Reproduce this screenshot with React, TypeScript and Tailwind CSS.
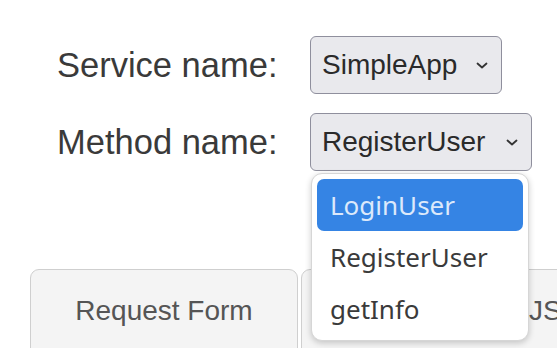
import React from "react";

function Chevron() {
  return (
    <svg width="14" height="9" viewBox="0 0 14 9" className="shrink-0">
      <polyline points="2.5,2.5 7,6.5 11.5,2.5" fill="none" stroke="#333" strokeWidth="1.8" strokeLinecap="round" strokeLinejoin="round" />
    </svg>
  );
}

function FakeSelect({ value, width }: { value: string; width: string }) {
  return (
    <div
      className={`flex h-[58px] shrink-0 items-center justify-between rounded-[6px] border border-[#8f8f9d] bg-[#e9e9ed] pl-[11px] pr-[12px] text-[28px] text-[#2a2a2a] ${width}`}
      style={{ fontFamily: '"Liberation Sans", Arial, sans-serif' }}
    >
      <span className="leading-none">{value}</span>
      <Chevron />
    </div>
  );
}

export default function App() {
  return (
    <div className="relative h-[348px] w-[557px] overflow-hidden bg-white" style={{ fontFamily: '"Liberation Sans", Arial, sans-serif' }}>
      <div className="flex flex-col gap-[19px] pl-[57px] pt-[36px]">
        <div className="flex items-center">
          <span className="w-[253px] shrink-0 text-[34.5px] leading-none text-[#3a3a3a]">Service name:</span>
          <FakeSelect value="SimpleApp" width="w-[192px]" />
        </div>
        <div className="flex items-center">
          <span className="w-[253px] shrink-0 text-[34.5px] leading-none text-[#3a3a3a]">Method name:</span>
          <FakeSelect value="RegisterUser" width="w-[222px]" />
        </div>
      </div>

      <div className="mt-[98px] flex gap-[3px] pl-[30px]">
        <div className="h-[100px] w-[268px] shrink-0 rounded-t-[9px] border border-[#cfcfcf] bg-[#f4f4f4] pt-[25px] text-center text-[28px] leading-[32px] text-[#555]">
          Request Form
        </div>
        <div className="h-[100px] w-[300px] shrink-0 rounded-t-[9px] border border-[#cfcfcf] bg-[#f4f4f4] pl-[227px] pt-[25px] text-[28px] leading-[32px] text-[#555]">
          JS
        </div>
      </div>

      <div
        className="absolute left-[311px] top-[173px] flex w-[218px] flex-col rounded-[11px] border border-[#d6d6d6] bg-white px-[5px] py-[5px] shadow-[0_2px_6px_rgba(0,0,0,0.2)]"
        style={{ fontFamily: '"Noto Sans", "Open Sans", sans-serif' }}
      >
        <div className="flex h-[52px] items-center rounded-[7px] bg-[#3584e4] pl-[13px] text-[26px] text-[#dce9fb]">LoginUser</div>
        <div className="flex h-[52px] items-center pl-[13px] text-[26px] text-[#3a3a3a]">RegisterUser</div>
        <div className="flex h-[52px] items-center pl-[13px] text-[26px] text-[#3a3a3a]">getInfo</div>
      </div>
    </div>
  );
}
